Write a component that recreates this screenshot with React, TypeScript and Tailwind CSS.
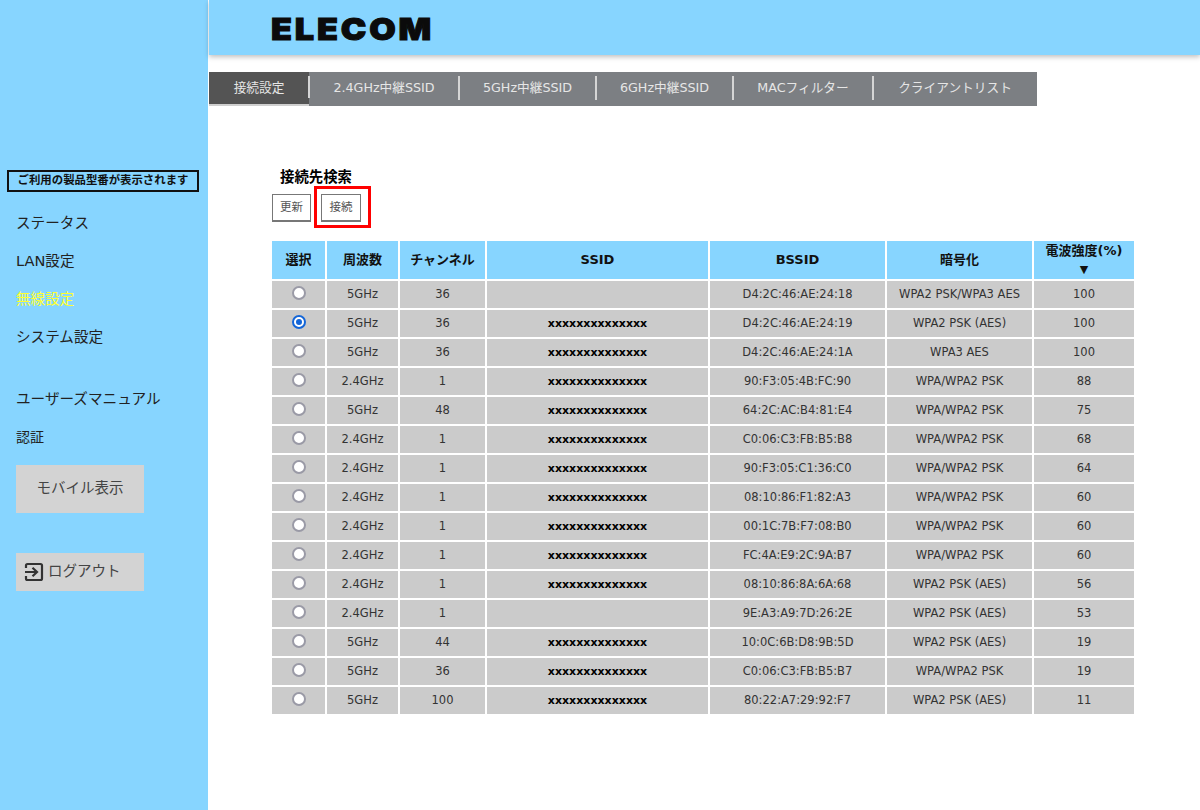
import React from "react";

const font = { fontFamily: '"DejaVu Sans", "Noto Sans CJK JP", sans-serif' };

const tabs = ["接続設定", "2.4GHz中継SSID", "5GHz中継SSID", "6GHz中継SSID", "MACフィルター", "クライアントリスト"];
const tabWidths = ["w-[100px]", "w-[150px]", "w-[137px]", "w-[137px]", "w-[140px]", "w-[164px]"];

const X = "xxxxxxxxxxxxxx";

const rows = [
  ["5GHz", "36", "", "D4:2C:46:AE:24:18", "WPA2 PSK/WPA3 AES", "100"],
  ["5GHz", "36", X, "D4:2C:46:AE:24:19", "WPA2 PSK (AES)", "100"],
  ["5GHz", "36", X, "D4:2C:46:AE:24:1A", "WPA3 AES", "100"],
  ["2.4GHz", "1", X, "90:F3:05:4B:FC:90", "WPA/WPA2 PSK", "88"],
  ["5GHz", "48", X, "64:2C:AC:B4:81:E4", "WPA/WPA2 PSK", "75"],
  ["2.4GHz", "1", X, "C0:06:C3:FB:B5:B8", "WPA/WPA2 PSK", "68"],
  ["2.4GHz", "1", X, "90:F3:05:C1:36:C0", "WPA/WPA2 PSK", "64"],
  ["2.4GHz", "1", X, "08:10:86:F1:82:A3", "WPA/WPA2 PSK", "60"],
  ["2.4GHz", "1", X, "00:1C:7B:F7:08:B0", "WPA/WPA2 PSK", "60"],
  ["2.4GHz", "1", X, "FC:4A:E9:2C:9A:B7", "WPA/WPA2 PSK", "60"],
  ["2.4GHz", "1", X, "08:10:86:8A:6A:68", "WPA2 PSK (AES)", "56"],
  ["2.4GHz", "1", "", "9E:A3:A9:7D:26:2E", "WPA2 PSK (AES)", "53"],
  ["5GHz", "44", X, "10:0C:6B:D8:9B:5D", "WPA2 PSK (AES)", "19"],
  ["5GHz", "36", X, "C0:06:C3:FB:B5:B7", "WPA/WPA2 PSK", "19"],
  ["5GHz", "100", X, "80:22:A7:29:92:F7", "WPA2 PSK (AES)", "11"],
];

function Radio({ checked }: { checked: boolean }) {
  if (checked) {
    return (
      <span className="block w-[14px] h-[14px] rounded-full border-2 border-[#1466d8] bg-white mx-auto relative -top-[2px]">
        <span className="block w-[6px] h-[6px] rounded-full bg-[#1466d8] m-[2px]" />
      </span>
    );
  }
  return <span className="block w-[14px] h-[14px] rounded-full border-2 border-[#9a9aa6] bg-white mx-auto relative -top-[2px]" />;
}

function LogoutIcon() {
  return (
    <svg width="20" height="20" viewBox="0 0 20 20" fill="none" stroke="#333" strokeWidth="2.2">
      <path d="M2 6V3.5A1.5 1.5 0 0 1 3.5 2h13A1.5 1.5 0 0 1 18 3.5v13a1.5 1.5 0 0 1-1.5 1.5h-13A1.5 1.5 0 0 1 2 16.5V14" />
      <path d="M1 10h11M8.5 5.8 13 10l-4.5 4.2" />
    </svg>
  );
}

export default function App() {
  return (
    <div className="flex w-[1200px] h-[810px] overflow-hidden bg-white" style={font}>
      <aside className="w-[208px] shrink-0 bg-[#87d5ff] pt-[170px] text-[14.6px] text-[#222]">
        <div className="mx-[7px] w-[192px] h-[22px] border-2 border-[#111] text-[11.4px] font-bold text-[#111] flex items-center justify-center whitespace-nowrap">
          ご利用の製品型番が表示されます
        </div>
        <nav className="mt-[12px] pl-[16px]">
          <div className="h-[38px] flex items-center">ステータス</div>
          <div className="h-[38px] flex items-center">LAN設定</div>
          <div className="h-[38px] flex items-center text-[#ffff33]">無線設定</div>
          <div className="h-[38px] flex items-center">システム設定</div>
          <div className="h-[38px] flex items-center mt-[24px]">ユーザーズマニュアル</div>
          <div className="h-[38px] flex items-center text-[14px]">認証</div>
        </nav>
        <div className="ml-[16px] mt-[9px] w-[128px] h-[48px] bg-[#d3d3d3] flex items-center justify-center text-[14.5px] text-[#444]">
          モバイル表示
        </div>
        <div className="ml-[16px] mt-[40px] w-[128px] h-[38px] bg-[#d3d3d3] flex items-center pl-[8px] gap-[4px] text-[14.5px] text-[#444]">
          <LogoutIcon />
          <span>ログアウト</span>
        </div>
      </aside>

      <main className="flex-1 min-w-0 border-l border-white">
        <header className="h-[55px] bg-[#87d5ff] shadow-[0_2px_5px_rgba(0,0,0,0.25)] pl-[62px] pt-[2px] flex items-center">
          <span className="text-[30px] leading-none font-black text-[#0b0b0b] tracking-[2.5px] font-['Inter'] [-webkit-text-stroke:1px_#0b0b0b] scale-x-[1.14] origin-left">
            ELECOM
          </span>
        </header>

        <div className="mt-[17px] flex w-[828px] h-[34px] bg-[#7c7f83] text-[12.7px] text-[#e6e6e6]">
          {tabs.map((t, i) => (
            <div key={t} className={`${tabWidths[i]} flex items-center justify-center relative whitespace-nowrap ${i === 0 ? "bg-[#545454] border-b-2 border-[#cfcfcf]" : "pb-[2px]"}`}>
              {t}
              {i < 5 && <span className="absolute right-[-0.5px] top-[4px] bottom-[6px] w-[1.5px] bg-[#d5d5d5]" />}
            </div>
          ))}
        </div>

        <div className="pl-[63px] pt-[62px]">
          <h2 className="pl-[8px] text-[14.4px] leading-[18px] font-bold text-black">接続先検索</h2>
          <div className="mt-[8px] flex items-start gap-[3px]">
            <button className="w-[39px] h-[28px] border border-[#777] border-b-2 text-[11.5px] text-[#555] bg-white">更新</button>
            <div className="border-[3px] border-[#f00] -mt-[8px] pt-[5px] pl-[4px] pr-[7px] pb-[3px]">
              <button className="block w-[40px] h-[28px] border border-[#777] border-b-2 text-[11.5px] text-[#555] bg-white">接続</button>
            </div>
          </div>

          <table className="mt-[11px] table-fixed border-separate border-spacing-[2px] -ml-[2px] w-[866px] text-[11.5px] text-[#333] text-center">
            <colgroup>
              <col className="w-[53px]" />
              <col className="w-[71px]" />
              <col className="w-[85px]" />
              <col className="w-[221px]" />
              <col className="w-[175px]" />
              <col className="w-[145px]" />
              <col className="w-[100px]" />
            </colgroup>
            <thead>
              <tr className="h-[38px] bg-[#87d5ff] text-[#111] text-[13px] font-bold">
                <th>選択</th>
                <th>周波数</th>
                <th>チャンネル</th>
                <th>SSID</th>
                <th>BSSID</th>
                <th>暗号化</th>
                <th className="leading-[18px]">
                  電波強度(%)
                  <br />
                  <span className="text-[11px]">▼</span>
                </th>
              </tr>
            </thead>
            <tbody>
              {rows.map((r, i) => (
                <tr key={i} className="h-[27px]">
                  <td className="bg-[#cbcbcb] p-0"><Radio checked={i === 1} /></td>
                  <td className="bg-[#cbcbcb] p-0 leading-none">{r[0]}</td>
                  <td className="bg-[#cbcbcb] p-0 leading-none">{r[1]}</td>
                  <td className="bg-[#cbcbcb] p-0 leading-none font-bold text-[11px] text-black">{r[2]}</td>
                  <td className="bg-[#cbcbcb] p-0 leading-none">{r[3]}</td>
                  <td className="bg-[#cbcbcb] p-0 leading-none">{r[4]}</td>
                  <td className="bg-[#cbcbcb] p-0 leading-none">{r[5]}</td>
                </tr>
              ))}
            </tbody>
          </table>
        </div>
      </main>
    </div>
  );
}
